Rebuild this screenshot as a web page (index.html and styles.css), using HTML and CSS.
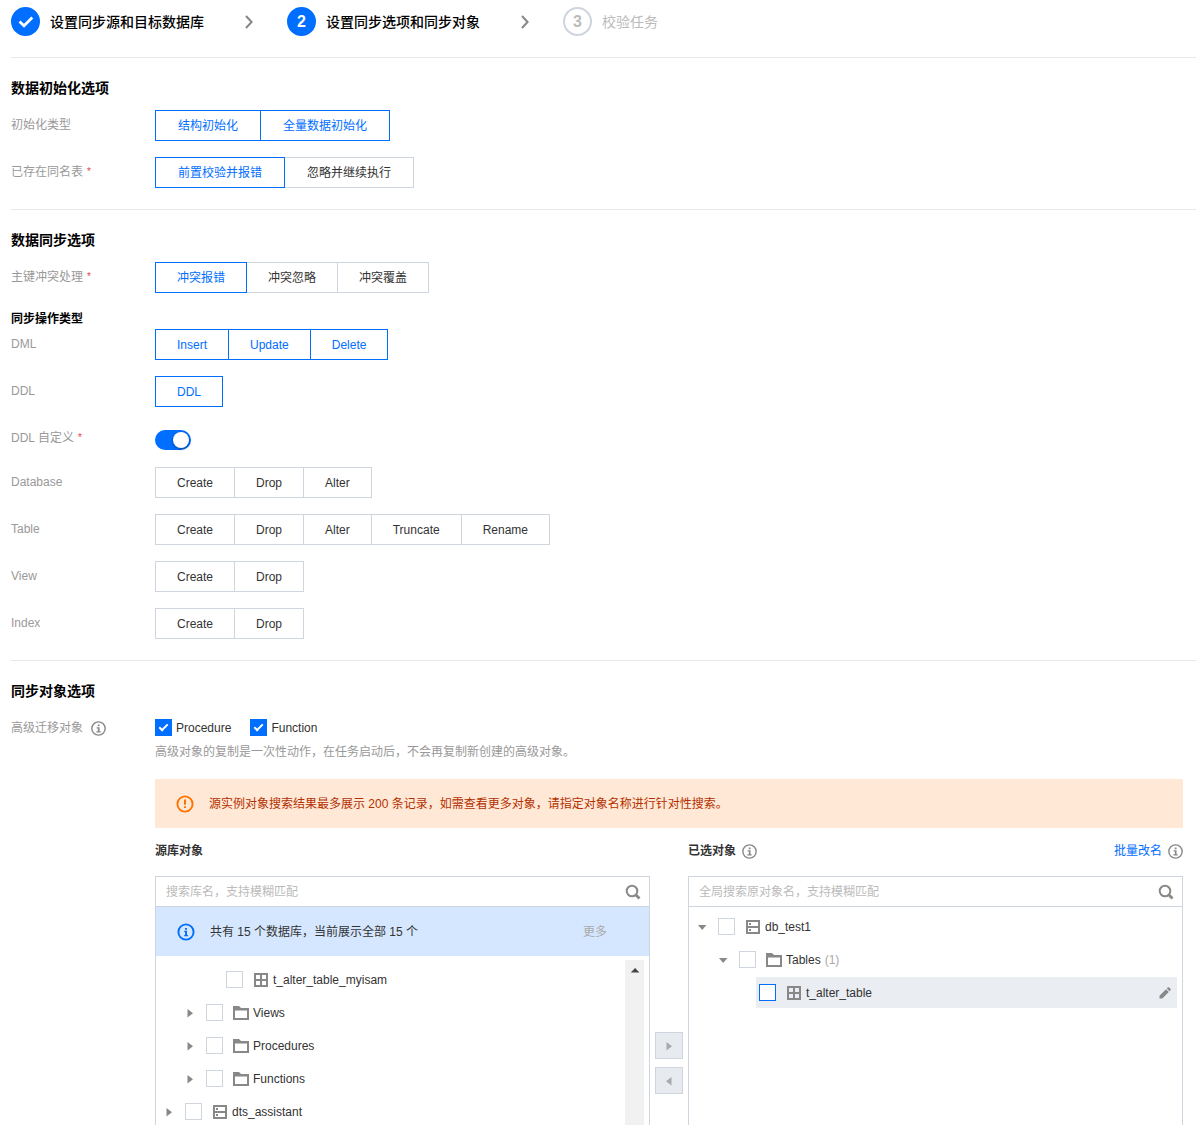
FILE: index.html
```html
<!DOCTYPE html>
<html lang="zh-CN">
    <head>
        <meta charset="UTF-8">
        <title>设置同步选项和同步对象</title>
        <link rel="stylesheet" href="styles.css">
    </head>
    <body>
        <svg class="sprite" aria-hidden="true">
            <symbol id="icon-info" viewBox="0 0 16 16">
                <circle cx="8" cy="8" r="7.1" fill="none" stroke="currentColor" stroke-width="1.5"/>
                <path d="M7.200 3.800h1.900v1.700H7.200zM6 6.700h3.100v4.200h1.200v1.300H5.800v-1.300h1.500V8H6z" fill="currentColor"/>
            </symbol>
            <symbol id="icon-notice" viewBox="0 0 18 18">
                <circle cx="9" cy="9" r="7.6" fill="none" stroke="currentColor" stroke-width="1.9"/>
                <path d="M8.1 4.900H10v1.900H8.100zM7.200 7.800H10v4.100h1v1.300H7.200v-1.300h.9V9.100h-.9z" fill="currentColor"/>
            </symbol>
            <symbol id="icon-warning" viewBox="0 0 18 18">
                <circle cx="9" cy="9" r="7.6" fill="none" stroke="currentColor" stroke-width="1.9"/>
                <path d="M8 4.600h2v5.200H8zM8 11.200h2v1.900H8z" fill="currentColor"/>
            </symbol>
            <symbol id="icon-search" viewBox="0 0 16 16">
                <circle cx="7" cy="7" r="5.3" fill="none" stroke="currentColor" stroke-width="2"/>
                <path d="M10.500 10.500l4 4" stroke="currentColor" stroke-width="2.8"/>
            </symbol>
            <symbol id="icon-chevron" viewBox="0 0 8 14">
                <path d="M1 1l5.600 6L1 13" fill="none" stroke="currentColor" stroke-width="2"/>
            </symbol>
            <symbol id="icon-check" viewBox="0 0 16 12">
                <path d="M1.500 5.500l4.500 4.300L14.300 1.600" fill="none" stroke="currentColor" stroke-width="2.800"/>
            </symbol>
            <symbol id="icon-table" viewBox="0 0 16 16">
                <path d="M2 2h12v12H2zM8 2v12M2 8h12" fill="none" stroke="currentColor" stroke-width="2"/>
            </symbol>
            <symbol id="icon-folder" viewBox="0 0 16 16">
                <path d="M0 1h6l2 2h8v12H0zM2 5.500V13h12V5.500z" fill="currentColor" fill-rule="evenodd"/>
            </symbol>
            <symbol id="icon-database" viewBox="0 0 16 16">
                <path d="M2 2h12v12H2zM2 8h12" fill="none" stroke="currentColor" stroke-width="2"/>
                <path d="M4 4h2v2H4zM4 10h2v2H4z" fill="currentColor"/>
            </symbol>
            <symbol id="icon-right" viewBox="0 0 12 12">
                <path d="M3.500 2v8.400L9 6.200z" fill="currentColor"/>
            </symbol>
            <symbol id="icon-left" viewBox="0 0 12 12">
                <path d="M8.500 2v8.400L3 6.200z" fill="currentColor"/>
            </symbol>
            <symbol id="icon-down" viewBox="0 0 12 12">
                <path d="M2 4h8.400L6.200 9z" fill="currentColor"/>
            </symbol>
            <symbol id="icon-up" viewBox="0 0 12 12">
                <path d="M1.800 8.500h8.600L6.100 4z" fill="currentColor"/>
            </symbol>
            <symbol id="icon-edit" viewBox="0 0 12 12">
                <path d="M.5 11.500V8.700L7 2.200 9.800 5l-6.500 6.500zM7.800 1.400L9 .3h1L11.700 2v1l-1.100 1.200z" fill="currentColor"/>
            </symbol>
        </svg>

        <div class="page">
            <ol class="steps">
                <li class="step">
                    <span class="step-mark done"><svg class="icon-check"><use href="#icon-check"/></svg></span>
                    设置同步源和目标数据库
                </li>
                <li class="step-arrow" aria-hidden="true"><svg><use href="#icon-chevron"/></svg></li>
                <li class="step" aria-current="step">
                    <span class="step-mark current">2</span>
                    设置同步选项和同步对象
                </li>
                <li class="step-arrow" aria-hidden="true"><svg><use href="#icon-chevron"/></svg></li>
                <li class="step todo">
                    <span class="step-mark">3</span>
                    校验任务
                </li>
            </ol>

            <section class="section">
                <h2>数据初始化选项</h2>
                <div class="row">
                    <span class="label" id="init-type">初始化类型</span>
                    <div class="segment wide" role="group" aria-labelledby="init-type">
                        <button type="button" class="active" aria-pressed="true">结构初始化</button>
                        <button type="button" class="active" aria-pressed="true">全量数据初始化</button>
                    </div>
                </div>
                <div class="row">
                    <span class="label" id="same-name">已存在同名表<span class="required">*</span></span>
                    <div class="segment wide" role="group" aria-labelledby="same-name">
                        <button type="button" class="active" aria-pressed="true">前置校验并报错</button>
                        <button type="button" aria-pressed="false">忽略并继续执行</button>
                    </div>
                </div>
            </section>

            <section class="section">
                <h2>数据同步选项</h2>
                <div class="row">
                    <span class="label" id="conflict">主键冲突处理<span class="required">*</span></span>
                    <div class="segment" role="group" aria-labelledby="conflict">
                        <button type="button" class="active" aria-pressed="true">冲突报错</button>
                        <button type="button" aria-pressed="false">冲突忽略</button>
                        <button type="button" aria-pressed="false">冲突覆盖</button>
                    </div>
                </div>
                <h3>同步操作类型</h3>
                <div class="row">
                    <span class="label" id="dml">DML</span>
                    <div class="segment" role="group" aria-labelledby="dml">
                        <button type="button" class="active" aria-pressed="true">Insert</button>
                        <button type="button" class="active" aria-pressed="true">Update</button>
                        <button type="button" class="active" aria-pressed="true">Delete</button>
                    </div>
                </div>
                <div class="row">
                    <span class="label" id="ddl">DDL</span>
                    <div class="segment" role="group" aria-labelledby="ddl">
                        <button type="button" class="active" aria-pressed="true">DDL</button>
                    </div>
                </div>
                <div class="row row-switch">
                    <label class="label" for="ddl-custom">DDL 自定义<span class="required">*</span></label>
                    <input type="checkbox" role="switch" class="switch" id="ddl-custom" checked>
                </div>
                <div class="row">
                    <span class="label" id="op-database">Database</span>
                    <div class="segment" role="group" aria-labelledby="op-database">
                        <button type="button" aria-pressed="false">Create</button>
                        <button type="button" aria-pressed="false">Drop</button>
                        <button type="button" aria-pressed="false">Alter</button>
                    </div>
                </div>
                <div class="row">
                    <span class="label" id="op-table">Table</span>
                    <div class="segment" role="group" aria-labelledby="op-table">
                        <button type="button" aria-pressed="false">Create</button>
                        <button type="button" aria-pressed="false">Drop</button>
                        <button type="button" aria-pressed="false">Alter</button>
                        <button type="button" aria-pressed="false">Truncate</button>
                        <button type="button" aria-pressed="false">Rename</button>
                    </div>
                </div>
                <div class="row">
                    <span class="label" id="op-view">View</span>
                    <div class="segment" role="group" aria-labelledby="op-view">
                        <button type="button" aria-pressed="false">Create</button>
                        <button type="button" aria-pressed="false">Drop</button>
                    </div>
                </div>
                <div class="row">
                    <span class="label" id="op-index">Index</span>
                    <div class="segment" role="group" aria-labelledby="op-index">
                        <button type="button" aria-pressed="false">Create</button>
                        <button type="button" aria-pressed="false">Drop</button>
                    </div>
                </div>
            </section>

            <section class="section section-objects">
                <h2>同步对象选项</h2>
                <div class="row">
                    <span class="label" id="advanced">高级迁移对象 <svg class="icon-info"><use href="#icon-info"/></svg></span>
                    <div class="content">
                        <div class="checks" role="group" aria-labelledby="advanced">
                            <label><input type="checkbox" class="checkbox" checked>Procedure</label>
                            <label><input type="checkbox" class="checkbox" checked>Function</label>
                        </div>
                        <p class="hint">高级对象的复制是一次性动作，在任务启动后，不会再复制新创建的高级对象。</p>
                        <div class="alert alert-warning">
                            <svg class="icon-alert"><use href="#icon-warning"/></svg>
                            <span>源实例对象搜索结果最多展示 200 条记录，如需查看更多对象，请指定对象名称进行针对性搜索。</span>
                        </div>

                        <div class="transfer">
                            <div class="side">
                                <div class="side-title"><strong>源库对象</strong></div>
                                <div class="panel">
                                    <div class="search">
                                        <input type="text" placeholder="搜索库名，支持模糊匹配" aria-label="搜索库名">
                                        <button type="button" aria-label="搜索"><svg class="icon"><use href="#icon-search"/></svg></button>
                                    </div>
                                    <div class="alert alert-info">
                                        <svg class="icon-alert"><use href="#icon-notice"/></svg>
                                        <span>共有 15 个数据库，当前展示全部 15 个</span>
                                        <button type="button" class="more" disabled>更多</button>
                                    </div>
                                    <div class="scroll">
                                        <ul class="tree">
                                            <li class="node leaf">
                                                <label><input type="checkbox" class="checkbox"><svg class="icon"><use href="#icon-table"/></svg>t_alter_table_myisam</label>
                                            </li>
                                            <li class="node level-1">
                                                <button type="button" class="expand" aria-label="展开 Views"><svg><use href="#icon-right"/></svg></button>
                                                <label><input type="checkbox" class="checkbox"><svg class="icon"><use href="#icon-folder"/></svg>Views</label>
                                            </li>
                                            <li class="node level-1">
                                                <button type="button" class="expand" aria-label="展开 Procedures"><svg><use href="#icon-right"/></svg></button>
                                                <label><input type="checkbox" class="checkbox"><svg class="icon"><use href="#icon-folder"/></svg>Procedures</label>
                                            </li>
                                            <li class="node level-1">
                                                <button type="button" class="expand" aria-label="展开 Functions"><svg><use href="#icon-right"/></svg></button>
                                                <label><input type="checkbox" class="checkbox"><svg class="icon"><use href="#icon-folder"/></svg>Functions</label>
                                            </li>
                                            <li class="node">
                                                <button type="button" class="expand" aria-label="展开 dts_assistant"><svg><use href="#icon-right"/></svg></button>
                                                <label><input type="checkbox" class="checkbox"><svg class="icon"><use href="#icon-database"/></svg>dts_assistant</label>
                                            </li>
                                        </ul>
                                        <div class="scrollbar"><svg><use href="#icon-up"/></svg></div>
                                    </div>
                                </div>
                            </div>

                            <div class="moves">
                                <button type="button" disabled aria-label="添加"><svg><use href="#icon-right"/></svg></button>
                                <button type="button" disabled aria-label="移除"><svg><use href="#icon-left"/></svg></button>
                            </div>

                            <div class="side">
                                <div class="side-title">
                                    <strong>已选对象</strong>
                                    <svg class="icon-info"><use href="#icon-info"/></svg>
                                    <a href="#">批量改名</a>
                                    <svg class="icon-info"><use href="#icon-info"/></svg>
                                </div>
                                <div class="panel">
                                    <div class="search">
                                        <input type="text" placeholder="全局搜索原对象名，支持模糊匹配" aria-label="全局搜索原对象名">
                                        <button type="button" aria-label="搜索"><svg class="icon"><use href="#icon-search"/></svg></button>
                                    </div>
                                    <ul class="tree">
                                        <li class="node">
                                            <button type="button" class="expand" aria-label="收起 db_test1"><svg><use href="#icon-down"/></svg></button>
                                            <label><input type="checkbox" class="checkbox"><svg class="icon"><use href="#icon-database"/></svg>db_test1</label>
                                        </li>
                                        <li class="node level-1">
                                            <button type="button" class="expand" aria-label="收起 Tables"><svg><use href="#icon-down"/></svg></button>
                                            <label><input type="checkbox" class="checkbox"><svg class="icon"><use href="#icon-folder"/></svg>Tables <span class="count">(1)</span></label>
                                        </li>
                                        <li class="node leaf hover">
                                            <label><input type="checkbox" class="checkbox"><svg class="icon"><use href="#icon-table"/></svg>t_alter_table</label>
                                            <button type="button" class="edit" aria-label="改名"><svg><use href="#icon-edit"/></svg></button>
                                        </li>
                                    </ul>
                                </div>
                            </div>
                        </div>
                    </div>
                </div>
            </section>
        </div>
    </body>
</html>
```
FILE: styles.css
```css
* {
    box-sizing: border-box;
    margin: 0;
    padding: 0;
}

body {
    font: 12px/20px "Liberation Sans", "Noto Sans CJK SC", sans-serif;
    color: #333;
    background: #fff;
}

button,
input {
    font: inherit;
    color: inherit;
}

button {
    border: none;
    background: none;
}

ol,
ul {
    list-style: none;
}

a {
    color: #006eff;
    text-decoration: none;
}

svg {
    display: block;
    flex: none;
}

.sprite {
    display: none;
}

.icon {
    width: 16px;
    height: 16px;
    color: #888;
}

.icon-info {
    width: 15px;
    height: 15px;
    color: #888;
}

.icon-alert {
    width: 18px;
    height: 18px;
}

.page {
    padding-left: 11px;
}

/* steps */
.steps {
    display: flex;
    align-items: center;
    height: 57px;
    padding-bottom: 14px;
}

.step {
    display: flex;
    align-items: center;
    gap: 10px;
    font-size: 14px;
    font-weight: 500;
    color: #000;
}

.step-mark {
    display: flex;
    align-items: center;
    justify-content: center;
    width: 29px;
    height: 29px;
    border: 2px solid #cfd5de;
    border-radius: 50%;
    font-size: 16px;
    font-weight: bold;
}

.step-mark.done,
.step-mark.current {
    border-color: #006eff;
    background: #006eff;
    color: #fff;
}

.icon-check {
    width: 16px;
    height: 12px;
}

.step.todo {
    color: #bbb;
    font-weight: normal;
}

.step-arrow {
    margin: 0 34px 0 41px;
    color: #888;
}

.step-arrow svg {
    width: 8px;
    height: 14px;
}

/* form */
.section {
    padding: 20px 0 21px;
    border-top: 1px solid #e5e8ed;
}

.section-objects {
    padding-bottom: 0;
}

h2 {
    margin-bottom: 12px;
    font-size: 14px;
    line-height: 20px;
    color: #000;
}

h3 {
    margin-top: 16px;
    font-size: 12px;
    line-height: 20px;
    color: #000;
}

.row {
    display: flex;
    align-items: flex-start;
}

.row + .row {
    margin-top: 16px;
}

.label {
    display: flex;
    align-items: center;
    flex: none;
    width: 144px;
    line-height: 30px;
    color: #999;
}

.label .icon-info {
    margin-left: 8px;
}

.required {
    margin-left: 4px;
    font-size: 10px;
    color: #e54545;
}

.row-switch {
    height: 28px;
}

.segment {
    display: flex;
}

.segment button {
    height: 31px;
    padding: 0 21px;
    border: 1px solid #cfd5de;
    background: #fff;
    color: #333;
}

.segment.wide button {
    padding: 0 22px;
}

.segment button + button {
    margin-left: -1px;
}

.segment .active {
    position: relative;
    border-color: #006eff;
    color: #006eff;
}

.switch {
    appearance: none;
    display: flex;
    justify-content: flex-end;
    width: 36px;
    height: 20px;
    margin-top: 7px;
    padding: 2px;
    border-radius: 10px;
    background: #006eff;
}

.switch::after {
    content: "";
    width: 16px;
    height: 16px;
    border-radius: 50%;
    background: #fff;
    box-shadow: 0 1px 3px rgba(0, 0, 0, 0.4);
}

.checkbox {
    appearance: none;
    display: flex;
    flex: none;
    justify-content: center;
    width: 17px;
    height: 17px;
    border: 1px solid #cfd5de;
    background: #fff;
}

.checkbox:checked {
    border-color: #006eff;
    background: #006eff;
}

.checkbox:checked::after {
    content: "";
    width: 9px;
    height: 5px;
    box-sizing: content-box;
    width: 7px;
    height: 3px;
    margin-top: 4px;
    border: solid #fff;
    border-width: 0 0 2px 2px;
    transform: rotate(-45deg);
}

.content {
    flex: 1;
    padding-right: 13px;
}

.checks {
    display: flex;
    gap: 19px;
    height: 29px;
}

.checks label {
    display: flex;
    align-items: center;
    gap: 4px;
}

.hint {
    color: #999;
}

.alert {
    display: flex;
    align-items: center;
    gap: 15px;
    height: 49px;
    padding: 0 21px;
}

.alert-warning {
    margin: 17px 0 13px;
    background: #ffe8d5;
    color: #b43000;
}

.alert-warning .icon-alert {
    color: #ff7200;
}

.alert-info {
    padding-right: 42px;
    background: #d5e7ff;
}

.alert-info .icon-alert {
    color: #006eff;
}

.more {
    margin-left: auto;
    color: #aaa;
}

/* transfer */
.transfer {
    display: grid;
    grid-template-columns: 1fr 28px 1fr;
    gap: 5px;
}

.side-title {
    display: flex;
    align-items: center;
    gap: 6px;
    height: 20px;
    margin-bottom: 15px;
}

.side-title a {
    margin-left: auto;
}

.panel {
    height: 249px;
    border: solid #cfd5de;
    border-width: 1px 1px 0;
    overflow: hidden;
}

.search {
    display: flex;
    align-items: center;
    height: 30px;
    padding: 0 8px 0 10px;
    border-bottom: 1px solid #cfd5de;
}

.search input {
    flex: 1;
    border: none;
    outline: none;
}

.search input::placeholder {
    color: #bbb;
}

.scroll {
    display: flex;
    padding: 4px 5px 0 0;
}

.scrollbar {
    display: flex;
    justify-content: center;
    width: 19px;
    padding-top: 4px;
    background: #f1f1f1;
    color: #444;
}

.scrollbar svg {
    width: 12px;
    height: 12px;
}

.tree {
    flex: 1;
    display: grid;
    gap: 2px;
    padding: 4px 0;
}

.node {
    display: flex;
    align-items: center;
    gap: 10px;
    height: 31px;
    padding-left: 7px;
}

.node.level-1 {
    padding-left: 28px;
}

.node.leaf {
    margin: 0 5px 0 67px;
    padding-left: 3px;
}

.node.hover {
    background: #eaedf2;
}

.node.hover .checkbox {
    border-color: #006eff;
}

.node label {
    display: flex;
    align-items: center;
    gap: 4px;
}

.node .checkbox {
    margin-right: 6px;
}

.count {
    color: #aaa;
}

.expand,
.expand svg {
    width: 12px;
    height: 12px;
    color: #888;
}

.edit {
    margin-left: auto;
    padding-right: 6px;
    color: #888;
}

.edit svg {
    width: 12px;
    height: 12px;
}

.moves {
    display: flex;
    flex-direction: column;
    justify-content: flex-end;
    gap: 8px;
    padding-bottom: 31px;
}

.moves button {
    display: flex;
    align-items: center;
    justify-content: center;
    height: 27px;
    border: 1px solid #cfd5de;
    background: #e7eaef;
    color: #aaa;
}

.moves svg {
    width: 12px;
    height: 12px;
}
```
